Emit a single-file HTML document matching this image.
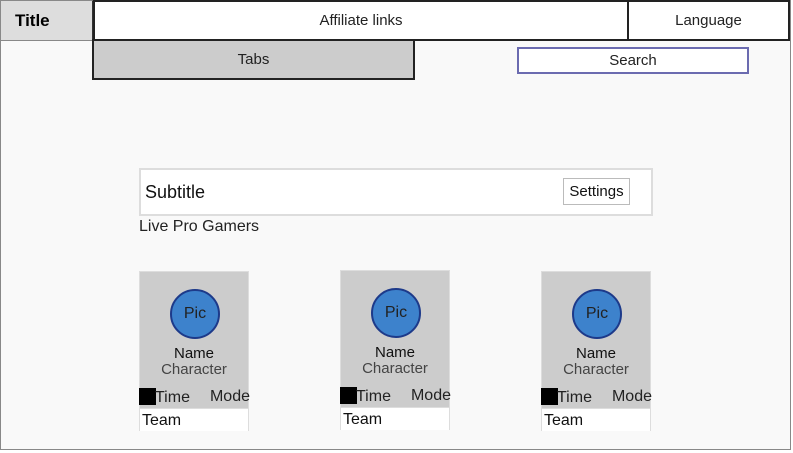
<!DOCTYPE html>
<html><head><style>
*{box-sizing:border-box;margin:0;padding:0}
body{width:793px;height:453px;background:#fff;font-family:"Liberation Sans",Arial,sans-serif;position:relative;overflow:hidden}
.a{position:absolute}
.c{display:flex;align-items:center;justify-content:center}
.card{position:absolute;width:110px;height:160px;border:1px solid #ddd;background:#ccc}
.pic{position:absolute;left:30px;top:17px;width:50px;height:50px;border-radius:50%;background:#3d82cc;border:2px solid #1d3a8a;display:flex;align-items:center;justify-content:center;font-size:16px;color:#222}
.nm{position:absolute;left:0;width:108px;text-align:center;font-size:15px;color:#111;top:73px}
.ch{position:absolute;left:0;width:108px;text-align:center;font-size:15px;color:#444;top:89px}
.sq{position:absolute;left:-1px;top:116px;width:17px;height:17px;background:#000}
.tm{position:absolute;left:15px;top:117px;font-size:16px;color:#222}
.md{position:absolute;right:-2px;top:116px;font-size:16px;color:#222}
.team{position:absolute;left:0;top:136px;width:108px;height:23px;background:#fff;border-top:1px solid #ddd;font-size:16px;color:#111;padding-left:2px;line-height:23px}
</style></head><body>
<div class="a" style="left:0;top:0;width:791px;height:450px;border:1px solid #888;background:#f9f9f9"></div>
<div class="a c" style="left:0;top:0;width:94px;height:41px;background:#ddd;border:1px solid #888;border-right:2px solid #333;font-weight:bold;font-size:17px;justify-content:flex-start;padding-left:14px">Title</div>
<div class="a c" style="left:93px;top:0;width:536px;height:41px;background:#fff;border:2px solid #222;font-size:15px;color:#222">Affiliate links</div>
<div class="a c" style="left:627px;top:0;width:163px;height:41px;background:#fff;border:2px solid #222;font-size:15px;color:#222">Language</div>
<div class="a c" style="left:92px;top:39px;width:323px;height:41px;background:#ccc;border:2px solid #222;font-size:15px;color:#222">Tabs</div>
<div class="a c" style="left:517px;top:47px;width:232px;height:27px;background:#fff;border:2px solid #6b6bb0;font-size:15px;color:#222">Search</div>
<div class="a" style="left:139px;top:168px;width:514px;height:48px;background:#fff;border:2px solid #ddd"></div>
<div class="a" style="left:145px;top:182px;font-size:18px;color:#111">Subtitle</div>
<div class="a c" style="left:563px;top:178px;width:67px;height:27px;border:1px solid #bbb;background:#fff;font-size:15px;color:#111">Settings</div>
<div class="a" style="left:139px;top:218px;font-size:16px;color:#222">Live Pro Gamers</div>
<div class="card" style="left:139px;top:271px"><div class="pic">Pic</div><div class="nm">Name</div><div class="ch">Character</div><div class="sq"></div><div class="tm">Time</div><div class="md">Mode</div><div class="team">Team</div></div>
<div class="card" style="left:340px;top:270px"><div class="pic">Pic</div><div class="nm">Name</div><div class="ch">Character</div><div class="sq"></div><div class="tm">Time</div><div class="md">Mode</div><div class="team">Team</div></div>
<div class="card" style="left:541px;top:271px"><div class="pic">Pic</div><div class="nm">Name</div><div class="ch">Character</div><div class="sq"></div><div class="tm">Time</div><div class="md">Mode</div><div class="team">Team</div></div>
</body></html>
